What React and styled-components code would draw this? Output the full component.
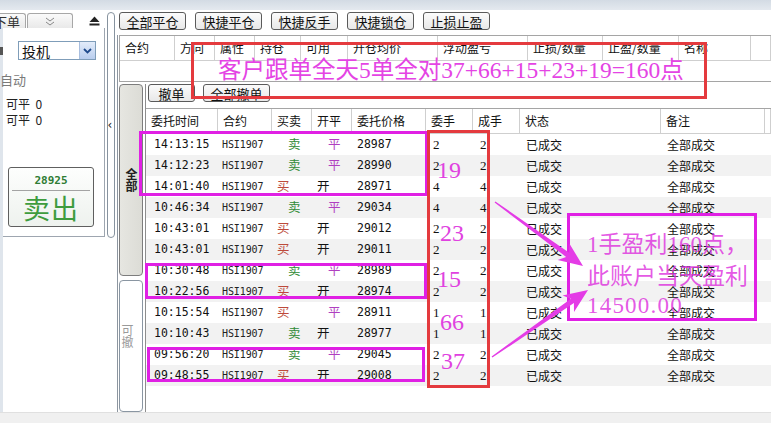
import styled, { createGlobalStyle } from "styled-components";

const GlobalStyle = createGlobalStyle`
  html, body {
    margin: 0;
    padding: 0;
    background: #ffffff;
  }
  body {
    font-family: "Noto Sans CJK SC", "Noto Sans", sans-serif;
    font-size: 12px;
    color: #111;
  }
  #root {
    width: 771px;
    height: 423px;
  }
`;

const posColumns = [
  ["合约", 55],
  ["方向", 40],
  ["属性", 40],
  ["持仓", 46],
  ["可用", 47],
  ["开仓均价", 90],
  ["浮动盈亏", 90],
  ["止损/数量", 75],
  ["止盈/数量", 76],
  ["名称", 72],
  ["", 0],
];

const orderColumns = [
  ["委托时间", 72],
  ["合约", 54],
  ["买卖", 40],
  ["开平", 40],
  ["委托价格", 74],
  ["委手", 47],
  ["成手", 47],
  ["状态", 141],
  ["备注", 104],
  ["", 0],
];

const orders = [
  ["14:13:15", "卖", "平", "28987", 2],
  ["14:12:23", "卖", "平", "28990", 2],
  ["14:01:40", "买", "开", "28971", 4],
  ["10:46:34", "卖", "平", "29034", 4],
  ["10:43:01", "买", "开", "29012", 2],
  ["10:43:01", "买", "开", "29011", 2],
  ["10:30:48", "卖", "平", "28989", 2],
  ["10:22:56", "买", "开", "28974", 2],
  ["10:15:54", "买", "平", "28911", 1],
  ["10:10:43", "卖", "开", "28977", 1],
  ["09:56:20", "卖", "平", "29045", 2],
  ["09:48:55", "买", "开", "29008", 2],
];

const template = (cols) =>
  cols.map(([, w]) => (w ? `${w}px` : "1fr")).join(" ");

const Arrow = ({ from, to }) => {
  const [x1, y1] = from;
  const [x2, y2] = to;
  const len = Math.hypot(x2 - x1, y2 - y1);
  const ux = (x2 - x1) / len;
  const uy = (y2 - y1) / len;
  const px = -uy;
  const py = ux;
  const bx = x2 - ux * 24;
  const by = y2 - uy * 24;
  const nx = x2 - ux * 19;
  const ny = y2 - uy * 19;
  const pts = [
    [x1 + px * 0.7, y1 + py * 0.7],
    [nx + px * 2.6, ny + py * 2.6],
    [bx + px * 10, by + py * 10],
    [x2, y2],
    [bx - px * 10, by - py * 10],
    [nx - px * 2.6, ny - py * 2.6],
    [x1 - px * 0.7, y1 - py * 0.7],
  ];
  return (
    <polygon
      points={pts.map((p) => p.map((v) => v.toFixed(1)).join(",")).join(" ")}
      fill="#e43ce6"
    />
  );
};

const App = () => {
  return (
    <Screen>
      <GlobalStyle />
      <TopStrip />
      <Body>
        <LeftPanel>
          <TabRow>
            <PanelTab $first>下单</PanelTab>
            <PanelTab>
              <svg width="12" height="9" viewBox="0 0 12 9">
                <path d="M2 1l4 3 4-3M2 5l4 3 4-3" fill="none" stroke="#888" strokeWidth="1" />
              </svg>
            </PanelTab>
            <Eject>
              <svg width="11" height="10" viewBox="0 0 11 10">
                <path d="M5.5 0.5L10.5 6H0.5z" fill="#222" />
                <rect x="0.5" y="7.5" width="10" height="2" fill="#222" />
              </svg>
            </Eject>
          </TabRow>
          <PanelBox>
            <SelectRow>
              <Marker />
              <Select>
                <span>投机</span>
                <DropButton>
                  <svg width="9" height="6" viewBox="0 0 9 6">
                    <path d="M1 1l3.5 3.5L8 1" fill="none" stroke="#1f4a8c" strokeWidth="1.8" />
                  </svg>
                </DropButton>
              </Select>
            </SelectRow>
            <AutoLabel>自动</AutoLabel>
            <CloseList>
              <CloseLine>可平&nbsp;&nbsp;0</CloseLine>
              <CloseLine>可平&nbsp;&nbsp;0</CloseLine>
            </CloseList>
            <SellButton>
              <SellPrice>28925</SellPrice>
              <SellLabel>卖出</SellLabel>
            </SellButton>
          </PanelBox>
        </LeftPanel>

        <Splitter>
          <span>‹</span>
        </Splitter>

        <Main>
          <Toolbar>
            {["全部平仓", "快捷平仓", "快捷反手", "快捷锁仓", "止损止盈"].map((t) => (
              <ToolButton key={t}>{t}</ToolButton>
            ))}
          </Toolbar>

          <Framed>
            <PosTable>
              <PosHeader>
                {posColumns.map(([label], i) => (
                  <HeadCell key={i}>{label}</HeadCell>
                ))}
              </PosHeader>
              <PosEmpty />
            </PosTable>

            <Orders>
              <SideTabs>
                <SideTab $active>全部</SideTab>
                <SideTab>可撤</SideTab>
              </SideTabs>
              <OrderPane>
                <ActionBar>
                  <SmallButton $w={47}>撤单</SmallButton>
                  <SmallButton $w={67}>全部撤单</SmallButton>
                </ActionBar>
                <Grid>
                  <OrderHeader>
                    {orderColumns.map(([label], i) => (
                      <HeadCell key={i}>{label}</HeadCell>
                    ))}
                  </OrderHeader>
                  {orders.map(([time, side, oc, price, qty], i) => (
                    <OrderRow key={i} $alt={i % 2 === 1}>
                      <TimeCell>{time}</TimeCell>
                      <CodeCell>HSI1907</CodeCell>
                      <MarkCell $tone={side === "卖" ? "green" : "red"} $indent={side === "卖"}>
                        {side}
                      </MarkCell>
                      <MarkCell $tone={oc === "平" ? "purple" : "black"} $indent={oc === "平"}>
                        {oc}
                      </MarkCell>
                      <TimeCell $pad={5}>{price}</TimeCell>
                      <QtyCell>{qty}</QtyCell>
                      <QtyCell>{qty}</QtyCell>
                      <TextCell>已成交</TextCell>
                      <TextCell>全部成交</TextCell>
                      <div />
                    </OrderRow>
                  ))}
                </Grid>
              </OrderPane>
            </Orders>
          </Framed>
        </Main>
      </Body>
      <StatusBar />

      <Frame $x={191} $y={42} $w={516} $h={57} $color="#e43a3e">
        <Headline>
          客户跟单全天5单全对37+66+15+23+19=160点
        </Headline>
      </Frame>
      <Frame $x={139} $y={131} $w={289} $h={65} $color="#e020e4" />
      <Frame $x={145} $y={263} $w={282} $h={36} $color="#e020e4" />
      <Frame $x={147} $y={347} $w={278} $h={35} $color="#e020e4" />
      <Frame $x={427} $y={130} $w={63} $h={258} $color="#e43a3e" />

      <Score $x={437} $y={158}>19</Score>
      <Score $x={440} $y={221}>23</Score>
      <Score $x={437} $y={267}>15</Score>
      <Score $x={440} $y={310}>66</Score>
      <Score $x={441} $y={349}>37</Score>

      <Frame $x={567} $y={213} $w={190} $h={108} $color="#e020e4">
        <Note>
          <NoteLine>1手盈利160点，</NoteLine>
          <NoteLine>此账户当天盈利</NoteLine>
          <NoteLine $tight>14500.00</NoteLine>
        </Note>
      </Frame>

      <ArrowLayer width="771" height="423" viewBox="0 0 771 423">
        <Arrow from={[495, 202]} to={[583, 266]} />
        <Arrow from={[492, 357]} to={[588, 290]} />
      </ArrowLayer>
    </Screen>
  );
};

export default App;

const Screen = styled.div`
  position: relative;
  width: 771px;
  height: 423px;
  overflow: hidden;
  background: #ffffff;
  display: flex;
  flex-direction: column;
`;

const TopStrip = styled.div`
  height: 10px;
  flex: none;
  background: linear-gradient(#d3dbe4, #e4e9ef);
`;

const Body = styled.div`
  height: 402px;
  flex: none;
  display: flex;
`;

const LeftPanel = styled.div`
  width: 105px;
  flex: none;
  display: flex;
  flex-direction: column;
  overflow: hidden;
  background: linear-gradient(90deg, #dfe5ec 3px, #ffffff 3px);
`;

const TabRow = styled.div`
  height: 18px;
  display: flex;
  align-items: flex-end;
  background: #ffffff;
`;

const PanelTab = styled.div`
  height: 15px;
  width: ${(p) => (p.$first ? 36 : 46)}px;
  margin-left: ${(p) => (p.$first ? -10 : 1)}px;
  padding-right: ${(p) => (p.$first ? 5 : 0)}px;
  box-sizing: border-box;
  border: 1px solid #a7a7a7;
  border-bottom: none;
  border-radius: 3px 3px 0 0;
  background: linear-gradient(#fafafa, #e9e9e9);
  display: flex;
  align-items: center;
  justify-content: ${(p) => (p.$first ? "flex-end" : "center")};
  font-size: 13px;
  line-height: 1;
  color: #333;
`;

const Eject = styled.div`
  margin-left: auto;
  margin-right: 5px;
  height: 15px;
  display: flex;
  align-items: center;
`;

const PanelBox = styled.div`
  height: 209px;
  margin-left: 3px;
  box-sizing: border-box;
  background: #ffffff;
  border-right: 1px solid #9ea6b0;
  border-bottom: 1px solid #9ea6b0;
  display: flex;
  flex-direction: column;
`;

const SelectRow = styled.div`
  margin-top: 13px;
  display: flex;
  align-items: center;
`;

const Marker = styled.div`
  width: 3px;
  height: 8px;
  margin-left: -3px;
  background: #555;
`;

const Select = styled.div`
  margin-left: 15px;
  width: 78px;
  height: 19px;
  box-sizing: border-box;
  border: 1px solid #7f9db9;
  display: flex;
  align-items: center;
  font-size: 14px;
  line-height: 1;
  span {
    padding-left: 3px;
    flex: 1;
  }
`;

const DropButton = styled.div`
  width: 15px;
  height: 17px;
  background: linear-gradient(#e3ecfa, #b8cdee);
  border-left: 1px solid #a8bedf;
  display: flex;
  align-items: center;
  justify-content: center;
`;

const AutoLabel = styled.div`
  margin: 12px 0 0 -3px;
  font-size: 13px;
  line-height: 16px;
  color: #7a7a7a;
`;

const CloseList = styled.div`
  margin: 8px 0 0 3px;
  display: flex;
  flex-direction: column;
`;

const CloseLine = styled.div`
  font-size: 12px;
  line-height: 16px;
  color: #222;
`;

const SellButton = styled.div`
  margin: 39px 0 0 5px;
  width: 86px;
  height: 60px;
  box-sizing: border-box;
  border: 1px solid #5f5f5f;
  border-radius: 3px;
  background: linear-gradient(#fdfefd, #eef2ee);
  display: flex;
  flex-direction: column;
  align-items: center;
`;

const SellPrice = styled.div`
  margin-top: 6px;
  width: 78px;
  padding-bottom: 3px;
  border-bottom: 1px solid #a3a3a3;
  text-align: center;
  font-family: "DejaVu Sans Mono", monospace;
  font-weight: bold;
  font-size: 11px;
  line-height: 13px;
  color: #2f7d34;
`;

const SellLabel = styled.div`
  margin-top: 2px;
  font-size: 27px;
  line-height: 30px;
  color: #3e9c3e;
  letter-spacing: 1px;
`;

const Splitter = styled.div`
  width: 8px;
  height: 226px;
  margin: 2px 2px 0 2px;
  box-sizing: border-box;
  flex: none;
  border: 1px solid #87939f;
  border-radius: 4px;
  background: #ffffff;
  display: flex;
  align-items: center;
  justify-content: center;
  span {
    font-family: "DejaVu Sans", sans-serif;
    font-size: 12px;
    line-height: 1;
    color: #222;
    margin-left: -2px;
  }
`;

const Main = styled.div`
  flex: 1;
  display: flex;
  flex-direction: column;
  padding-top: 2px;
  min-width: 0;
`;

const Toolbar = styled.div`
  height: 18px;
  padding-left: 2px;
  display: flex;
  gap: 9px;
`;

const ToolButton = styled.div`
  width: 67px;
  height: 18px;
  box-sizing: border-box;
  border: 1px solid #5a5a5a;
  border-radius: 3px;
  background: linear-gradient(#fbfbfb, #e8e8e8);
  display: flex;
  align-items: center;
  justify-content: center;
  font-size: 13px;
  line-height: 1;
  color: #111;
`;

const Framed = styled.div`
  flex: 1;
  margin-top: 5px;
  border-left: 1px solid #8d96a0;
  display: flex;
  flex-direction: column;
`;

const PosTable = styled.div`
  margin-left: 1px;
  border-top: 1px solid #a5a5a5;
  border-left: 1px solid #a5a5a5;
  border-bottom: 1px solid #a5a5a5;
`;

const PosHeader = styled.div`
  height: 24px;
  display: grid;
  grid-template-columns: ${template(posColumns)};
  border-bottom: 1px solid #cfcfcf;
`;

const PosEmpty = styled.div`
  height: 20px;
`;

const HeadCell = styled.div`
  box-sizing: border-box;
  border-right: 1px solid #cfcfcf;
  padding-left: 5px;
  display: flex;
  align-items: center;
  font-size: 12px;
  line-height: 1;
  color: #111;
  white-space: nowrap;
  overflow: hidden;
`;

const Orders = styled.div`
  flex: 1;
  margin-top: 2px;
  display: flex;
`;

const SideTabs = styled.div`
  width: 25px;
  margin-left: 1px;
  display: flex;
  flex-direction: column;
  gap: 4px;
`;

const SideTab = styled.div`
  box-sizing: border-box;
  width: 100%;
  height: ${(p) => (p.$active ? 192 : 132)}px;
  border: 1px solid ${(p) => (p.$active ? "#7d7d7d" : "#8a96a2")};
  border-radius: 4px;
  background: ${(p) => (p.$active ? "linear-gradient(90deg, #e6e6e1, #dcdcd6)" : "#ffffff")};
  display: flex;
  flex-direction: column;
  align-items: center;
  justify-content: ${(p) => (p.$active ? "center" : "flex-end")};
  padding-bottom: ${(p) => (p.$active ? 0 : 20)}px;
  font-size: 12px;
  font-weight: ${(p) => (p.$active ? "bold" : "normal")};
  line-height: 14px;
  color: ${(p) => (p.$active ? "#222" : "#9a9a9a")};
  writing-mode: vertical-rl;
  text-orientation: upright;
`;

const OrderPane = styled.div`
  flex: 1;
  margin-left: 2px;
  display: flex;
  flex-direction: column;
  border-left: 1px solid #8d8d8d;
`;

const ActionBar = styled.div`
  height: 18px;
  padding-left: 2px;
  display: flex;
  gap: 8px;
`;

const SmallButton = styled(ToolButton)`
  width: ${(p) => p.$w}px;
  height: 18px;
`;

const Grid = styled.div`
  margin-top: 6px;
  flex: 1;
  border-top: 1px solid #a5a5a5;
`;

const OrderHeader = styled.div`
  height: 24px;
  display: grid;
  grid-template-columns: ${template(orderColumns)};
  border-bottom: 1px solid #cfcfcf;
`;

const OrderRow = styled.div`
  height: 21px;
  display: grid;
  grid-template-columns: ${template(orderColumns)};
  align-items: center;
  background: ${(p) => (p.$alt ? "#f2f2f2" : "#ffffff")};
`;

const TimeCell = styled.div`
  padding-left: ${(p) => p.$pad ?? 8}px;
  font-family: "DejaVu Sans Mono", monospace;
  font-size: 11.5px;
  line-height: 1;
  color: #111;
`;

const CodeCell = styled.div`
  padding-left: 4px;
  font-family: "DejaVu Sans Mono", monospace;
  font-size: 10px;
  line-height: 1;
  letter-spacing: -0.1px;
  color: #222;
`;

const tones = {
  green: "#2f8a35",
  red: "#bd4a3c",
  purple: "#b03fc0",
  black: "#111111",
};

const MarkCell = styled.div`
  padding-left: ${(p) => (p.$indent ? 16 : 5)}px;
  font-size: 12.5px;
  line-height: 1;
  color: ${(p) => tones[p.$tone]};
`;

const QtyCell = styled.div`
  padding-left: 7px;
  font-family: "Liberation Serif", serif;
  font-size: 13px;
  line-height: 1;
  color: #111;
`;

const TextCell = styled.div`
  padding-left: 6px;
  font-size: 12px;
  line-height: 1;
  color: #111;
`;

const StatusBar = styled.div`
  flex: 1;
  background: #f0f0f0;
  border-top: 1px solid #e0e0e0;
`;

const Frame = styled.div`
  position: absolute;
  left: ${(p) => p.$x}px;
  top: ${(p) => p.$y}px;
  width: ${(p) => p.$w}px;
  height: ${(p) => p.$h}px;
  box-sizing: border-box;
  border: 3px solid ${(p) => p.$color};
  display: flex;
  align-items: center;
  justify-content: center;
`;

const Headline = styled.div`
  font-family: "Liberation Serif", "Noto Sans CJK SC", serif;
  font-size: 23.5px;
  line-height: 1;
  color: #e444e4;
  white-space: nowrap;
  margin-left: 4px;
`;

const Score = styled.div`
  position: absolute;
  left: ${(p) => p.$x}px;
  top: ${(p) => p.$y}px;
  font-family: "Liberation Serif", serif;
  font-size: 24px;
  line-height: 1;
  color: #e042e0;
`;

const Note = styled.div`
  align-self: stretch;
  flex: 1;
  padding: 17px 0 0 17px;
  display: flex;
  flex-direction: column;
`;

const NoteLine = styled.div`
  font-family: "Liberation Serif", "Noto Sans CJK SC", serif;
  font-size: 23px;
  line-height: 24px;
  margin-top: ${(p) => (p.$tight ? 5 : 8)}px;
  letter-spacing: ${(p) => (p.$tight ? 1.2 : 0)}px;
  color: rgba(222, 52, 222, 0.82);
  white-space: nowrap;
  &:first-child {
    margin-top: 0;
  }
`;

const ArrowLayer = styled.svg`
  position: absolute;
  left: 0;
  top: 0;
  pointer-events: none;
`;
